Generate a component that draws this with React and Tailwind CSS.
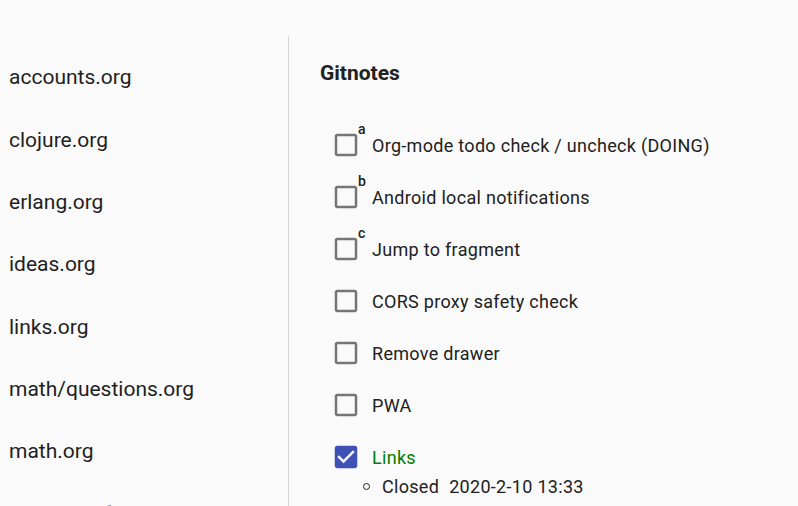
import React from "react";

const files = [
  "accounts.org",
  "clojure.org",
  "erlang.org",
  "ideas.org",
  "links.org",
  "math/questions.org",
  "math.org",
  "projects/life.org",
];

const todos = [
  { text: "Org-mode todo check / uncheck (DOING)", sup: "a" },
  { text: "Android local notifications", sup: "b" },
  { text: "Jump to fragment", sup: "c" },
  { text: "CORS proxy safety check" },
  { text: "Remove drawer" },
  { text: "PWA" },
];

function Box({ checked }) {
  return checked ? (
    <svg width="30" height="30" viewBox="0 0 24 24" className="block">
      <path
        fill="#3f51b5"
        d="M19 3H5c-1.11 0-2 .9-2 2v14c0 1.1.89 2 2 2h14c1.11 0 2-.9 2-2V5c0-1.1-.89-2-2-2zm-9 14l-5-5 1.41-1.41L10 14.17l7.59-7.59L19 8l-9 9z"
      />
    </svg>
  ) : (
    <svg width="30" height="30" viewBox="0 0 24 24" className="block">
      <path
        fill="#757575"
        d="M19 5v14H5V5h14m0-2H5c-1.11 0-2 .9-2 2v14c0 1.1.89 2 2 2h14c1.1 0 2-.9 2-2V5c0-1.1-.9-2-2-2z"
      />
    </svg>
  );
}

export default function App() {
  return (
    <div
      className="h-[506px] w-[798px] overflow-hidden bg-[#fafafa] pt-[36px] flex text-[#212121]"
      style={{ fontFamily: "Roboto, 'Liberation Sans', sans-serif" }}
    >
      <div className="w-[289px] shrink-0 border-r border-[#d6d6d6] pt-[11px]">
        {files.map((f) => (
          <div key={f} className="h-[62.33px] flex items-center pl-[9px] text-[21px] text-[#1f1f1f]">
            {f}
          </div>
        ))}
      </div>
      <div className="flex-1 pl-[31px]">
        <div className="mt-[23px] h-[28px] leading-[28px] text-[21px] font-bold">Gitnotes</div>
        <div className="mt-[32px] pl-[11px] text-[18px] tracking-[0.3px]">
          {todos.map((t) => (
            <div key={t.text} className="h-[52px] flex items-center">
              <div className="relative w-[30px] h-[30px]">
                <Box />
                {t.sup && (
                  <span className="absolute left-[27px] top-[-8px] text-[14px] font-medium leading-[14px]">
                    {t.sup}
                  </span>
                )}
              </div>
              <span className="ml-[11px]">{t.text}</span>
            </div>
          ))}
          <div className="h-[52px] flex items-center">
            <Box checked />
            <span className="ml-[11px] text-[#008000]">Links</span>
          </div>
          <div className="mt-[-9px] h-[24px] flex items-center pl-[32px]">
            <span className="w-[7px] h-[7px] rounded-full border border-[#212121] mr-[12px]"></span>
            <span>Closed</span>
            <span className="ml-[10px]">2020-2-10 13:33</span>
          </div>
        </div>
      </div>
    </div>
  );
}
